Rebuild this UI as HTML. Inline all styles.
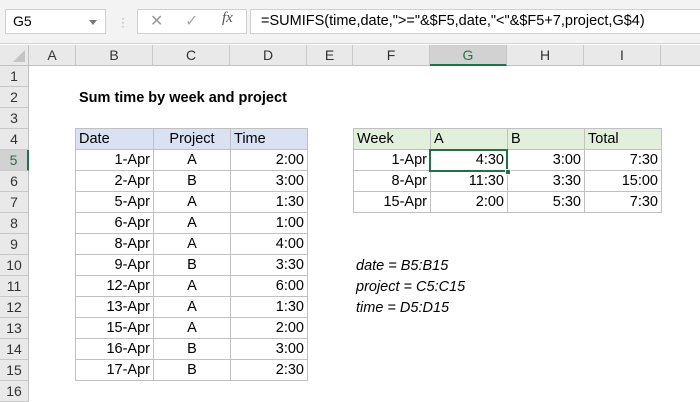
<!DOCTYPE html>
<html><head><style>
*{margin:0;padding:0;box-sizing:border-box}
body{width:700px;height:400px;overflow:hidden;background:#fff;font-family:"Liberation Sans",Calibri,sans-serif;font-size:14.5px;color:#000;position:relative}
.a{position:absolute}
.top{left:0;top:0;width:700px;height:44px;background:#f3f3f3;border-bottom:1px solid #d4d4d4}
.box{background:#fff;border:1px solid #d0d0d0}
.ch{top:45px;height:21px;background:#e9e9e9;border-right:1px solid #c8c8c8;border-bottom:1px solid #c0c0c0;text-align:center;line-height:21px;color:#333;font-size:14px}
.rh{left:0;width:29px;height:21px;background:#e9e9e9;border-bottom:1px solid #c8c8c8;border-right:1px solid #c0c0c0;text-align:center;line-height:21px;color:#333;font-size:14px}
.c{height:21px;line-height:21px;border-right:1px solid #c0c0c0;border-bottom:1px solid #c0c0c0;padding:0 3px;white-space:nowrap}
.r{text-align:right}.m{text-align:center}
i{font-style:italic}
</style></head><body>
<div class="a top"></div>
<div class="a box" style="left:5px;top:9px;width:101px;height:25px;padding-left:7px;line-height:23px;font-size:14px">G5<span style="position:absolute;right:8px;top:10px;border:4px solid transparent;border-top:5px solid #777"></span></div>
<div class="a" style="left:121px;top:16px;color:#aaa;font-size:12px;line-height:4px">·<br>·<br>·</div>
<div class="a box" style="left:137px;top:9px;width:110px;height:25px"></div>
<div class="a" style="left:150px;top:11px;color:#999;font-size:16px">✕</div>
<div class="a" style="left:185px;top:11px;color:#aaa;font-size:16px">✓</div>
<div class="a" style="left:222px;top:10px;color:#555;font-size:15px;font-family:'Liberation Serif',serif;font-style:italic">fx</div>
<div class="a box" style="left:250px;top:9px;width:452px;height:25px;padding-left:10px;line-height:23px;font-size:14.5px">=SUMIFS(time,date,"&gt;="&amp;$F5,date,"&lt;"&amp;$F5+7,project,G$4)</div>

<div class="a" style="left:0;top:45px;width:29px;height:21px;background:#e9e9e9;border-right:1px solid #c0c0c0;border-bottom:1px solid #c0c0c0"><span style="position:absolute;right:3px;bottom:3px;border-left:12px solid transparent;border-bottom:12px solid #c4c4c4"></span></div>
<div class="a ch" style="left:29px;width:47px">A</div>
<div class="a ch" style="left:76px;width:77px">B</div>
<div class="a ch" style="left:153px;width:77px">C</div>
<div class="a ch" style="left:230px;width:77px">D</div>
<div class="a ch" style="left:307px;width:46px">E</div>
<div class="a ch" style="left:353px;width:77px">F</div>
<div class="a ch" style="left:430px;width:77px;background:#d2d2d2;border-bottom:2px solid #217346;color:#217346">G</div>
<div class="a ch" style="left:507px;width:77px">H</div>
<div class="a ch" style="left:584px;width:77px">I</div>
<div class="a ch" style="left:661px;width:40px"></div>

<div class="a rh" style="top:66px">1</div><div class="a rh" style="top:87px">2</div><div class="a rh" style="top:108px">3</div><div class="a rh" style="top:129px">4</div>
<div class="a rh" style="top:150px;background:#d2d2d2;border-right:2px solid #217346;color:#217346">5</div>
<div class="a rh" style="top:171px">6</div><div class="a rh" style="top:192px">7</div><div class="a rh" style="top:213px">8</div><div class="a rh" style="top:234px">9</div><div class="a rh" style="top:255px">10</div><div class="a rh" style="top:276px">11</div><div class="a rh" style="top:297px">12</div><div class="a rh" style="top:318px">13</div><div class="a rh" style="top:339px">14</div><div class="a rh" style="top:360px">15</div><div class="a rh" style="top:381px">16</div>

<div class="a" style="left:79px;top:88px;font-weight:bold;line-height:21px">Sum time by week and project</div>

<table class="a" style="left:75px;top:128px;border-collapse:collapse;font-size:14.5px">
<style>table td{border:1px solid #c0c0c0;height:21px;padding:0 3px;line-height:19px;white-space:nowrap}</style>
<tr style="background:#d9e1f2"><td style="width:78px">Date</td><td class="m" style="width:77px">Project</td><td style="width:77px">Time</td></tr>
<tr><td class="r">1-Apr</td><td class="m">A</td><td class="r">2:00</td></tr>
<tr><td class="r">2-Apr</td><td class="m">B</td><td class="r">3:00</td></tr>
<tr><td class="r">5-Apr</td><td class="m">A</td><td class="r">1:30</td></tr>
<tr><td class="r">6-Apr</td><td class="m">A</td><td class="r">1:00</td></tr>
<tr><td class="r">8-Apr</td><td class="m">A</td><td class="r">4:00</td></tr>
<tr><td class="r">9-Apr</td><td class="m">B</td><td class="r">3:30</td></tr>
<tr><td class="r">12-Apr</td><td class="m">A</td><td class="r">6:00</td></tr>
<tr><td class="r">13-Apr</td><td class="m">A</td><td class="r">1:30</td></tr>
<tr><td class="r">15-Apr</td><td class="m">A</td><td class="r">2:00</td></tr>
<tr><td class="r">16-Apr</td><td class="m">B</td><td class="r">3:00</td></tr>
<tr><td class="r">17-Apr</td><td class="m">B</td><td class="r">2:30</td></tr>
</table>

<table class="a" style="left:353px;top:128px;border-collapse:collapse;font-size:14.5px">
<tr style="background:#e2efda"><td style="width:77px">Week</td><td style="width:77px">A</td><td style="width:77px">B</td><td style="width:77px">Total</td></tr>
<tr><td class="r">1-Apr</td><td class="r">4:30</td><td class="r">3:00</td><td class="r">7:30</td></tr>
<tr><td class="r">8-Apr</td><td class="r">11:30</td><td class="r">3:30</td><td class="r">15:00</td></tr>
<tr><td class="r">15-Apr</td><td class="r">2:00</td><td class="r">5:30</td><td class="r">7:30</td></tr>
</table>
<div class="a" style="left:429px;top:149px;width:79px;height:23px;border:2px solid #217346"></div>
<div class="a" style="left:505px;top:169px;width:6px;height:6px;background:#217346;border:1px solid #fff"></div>

<div class="a" style="left:356px;top:256px;line-height:21px;font-style:italic">date = B5:B15<br>project = C5:C15<br>time = D5:D15</div>
</body></html>
